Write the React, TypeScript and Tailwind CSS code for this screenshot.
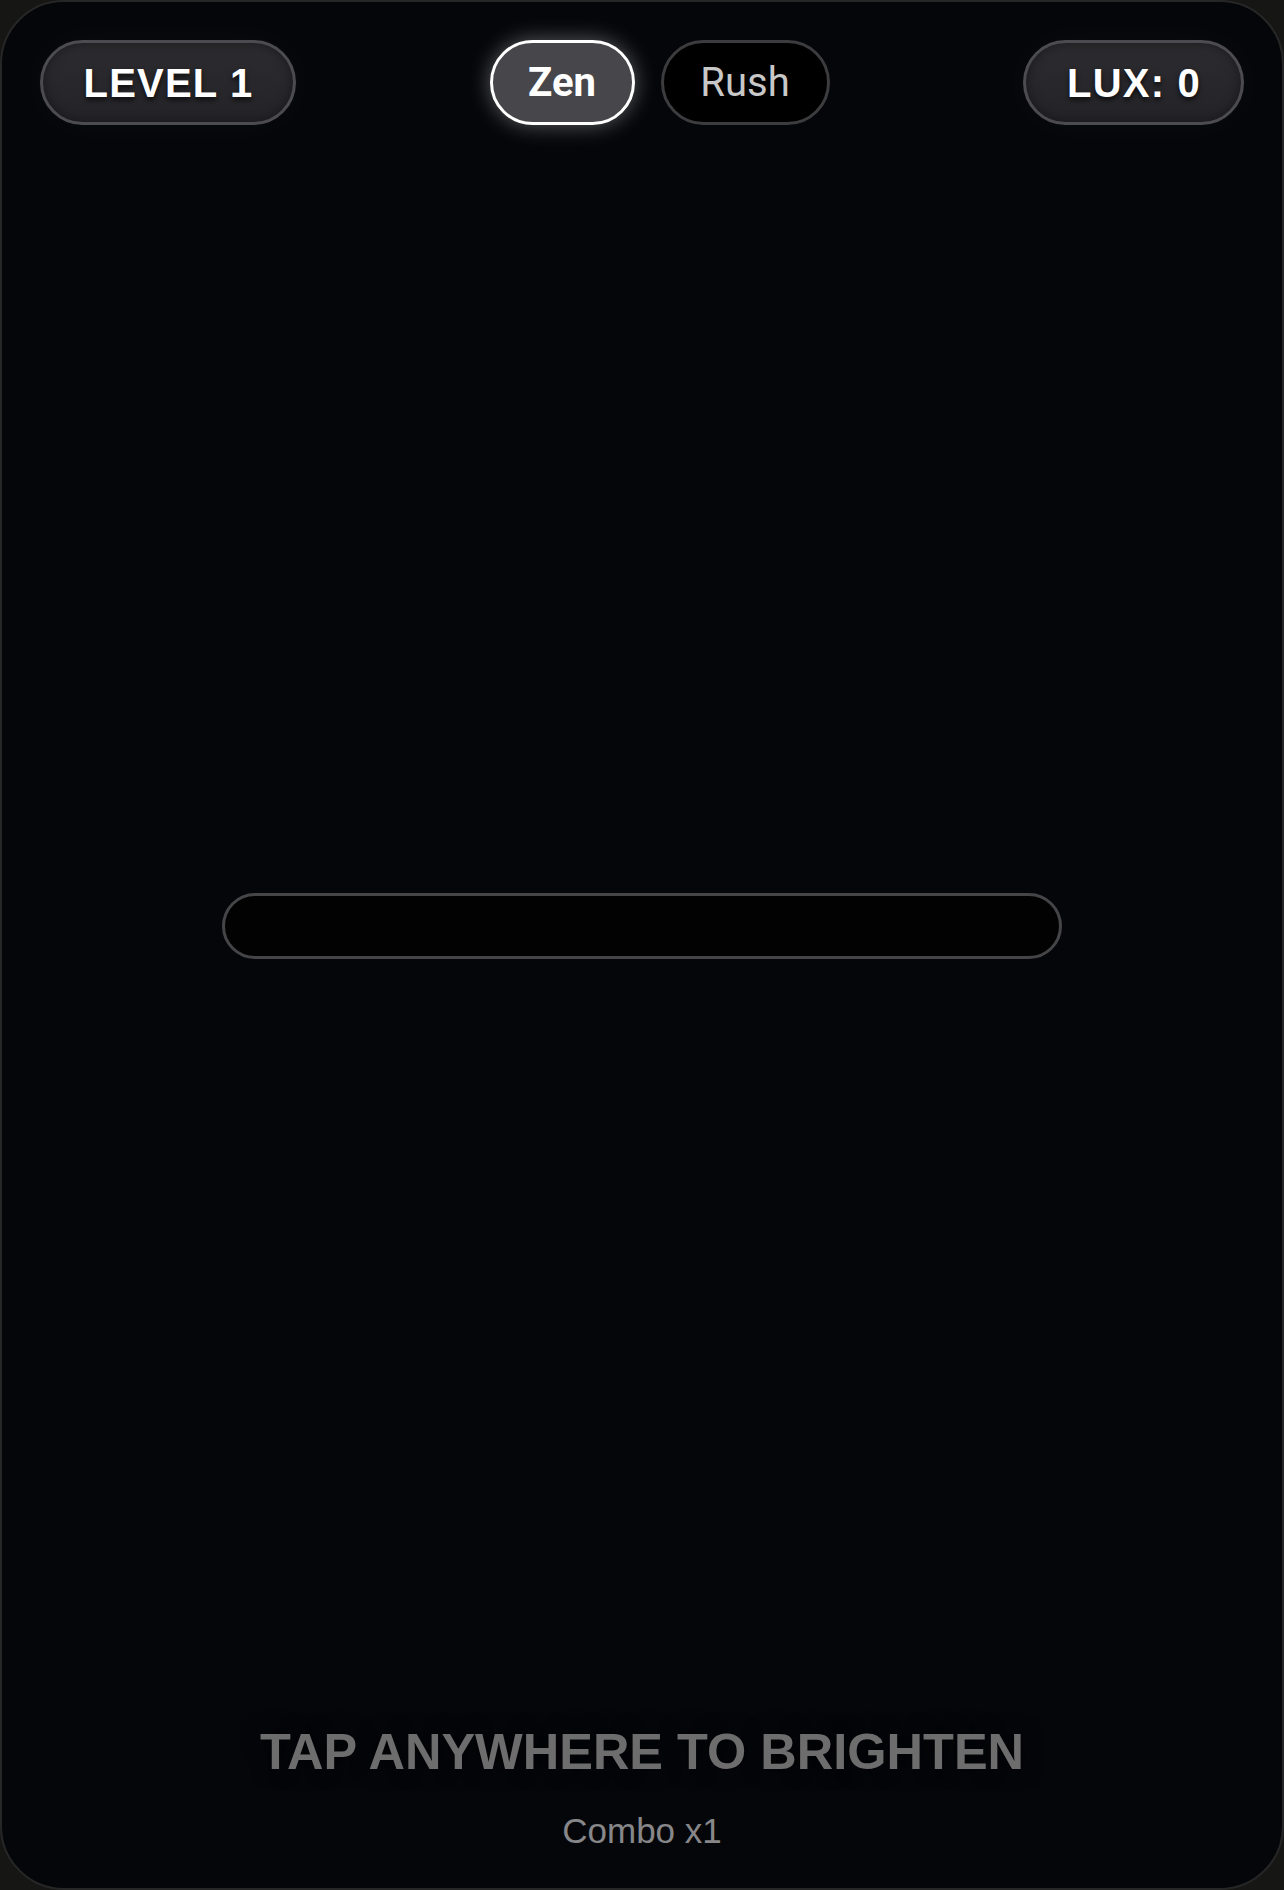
import React from "react";

export default function App() {
  return (
    <div className="w-[1284px] h-[1890px] bg-[#161615]">
      <div
        className="w-full h-full rounded-[64px] border-2 border-[#262626] bg-[#05060a] flex flex-col overflow-hidden"
        style={{ fontFamily: '"Liberation Sans", Arial, sans-serif' }}
      >
        <header className="flex items-center justify-between pt-[38px] px-[38px]">
          <div className="w-[256px] h-[85px] rounded-full border-[3px] border-[#4c4c50] bg-gradient-to-b from-[#2c2c30] to-[#242428] flex items-center justify-center shadow-[0_0_40px_rgba(255,255,255,0.03),inset_0_0_12px_rgba(0,0,0,0.4)]">
            <span className="text-[40px] leading-none font-bold tracking-[1.2px] text-white [text-shadow:0_3px_5px_rgba(0,0,0,0.7)] pl-[1px]">
              LEVEL 1
            </span>
          </div>

          <div className="flex items-center gap-[26px]" style={{ fontFamily: 'Roboto, "Liberation Sans", sans-serif' }}>
            <div className="w-[145px] h-[85px] rounded-full border-[3px] border-white bg-[#46464b] flex items-center justify-center shadow-[0_0_22px_rgba(255,255,255,0.35)]">
              <span className="text-[40px] leading-none font-bold text-white">Zen</span>
            </div>
            <div className="w-[169px] h-[85px] rounded-full border-[3px] border-[#3c3c3e] bg-black flex items-center justify-center">
              <span className="text-[40px] leading-none font-normal text-[#c8c8c8]">Rush</span>
            </div>
          </div>

          <div className="w-[221px] h-[85px] rounded-full border-[3px] border-[#4c4c50] bg-gradient-to-b from-[#2c2c30] to-[#242428] flex items-center justify-center shadow-[0_0_40px_rgba(255,255,255,0.03),inset_0_0_12px_rgba(0,0,0,0.4)]">
            <span className="text-[40px] leading-none font-bold tracking-[1.2px] text-white [text-shadow:0_3px_5px_rgba(0,0,0,0.7)] pl-[1px]">
              LUX: 0
            </span>
          </div>
        </header>

        <main className="flex-1 flex items-center justify-center">
          <div className="w-[840px] h-[66px] rounded-full border-[3px] border-[#454548] bg-[#020203]" />
        </main>

        <footer className="flex flex-col items-center pb-[40px]">
          <div className="text-[50.5px] leading-[50px] font-bold text-[#6d6d6e] [text-shadow:0_0_20px_rgba(0,0,0,0.8)]">
            TAP ANYWHERE TO BRIGHTEN
          </div>
          <div className="mt-[36px] text-[35px] leading-[35px] text-[#878789]">Combo x1</div>
        </footer>
      </div>
    </div>
  );
}
